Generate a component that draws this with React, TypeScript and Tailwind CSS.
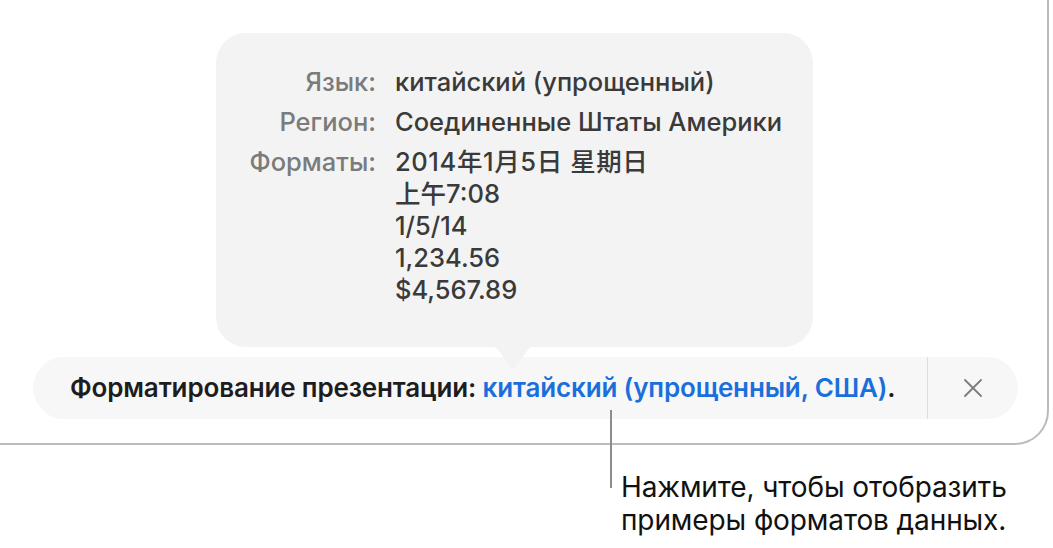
import React from "react";

export default function App() {
  const font = { fontFamily: 'Inter, "Noto Sans CJK SC", sans-serif' };
  return (
    <div className="relative w-[1053px] h-[548px] bg-white overflow-hidden" style={font}>
      {/* window frame */}
      <div className="h-[445px] w-[1049px] border-b-2 border-r-2 border-[#bcbcbc] rounded-br-[34px] flex flex-col justify-end pb-[24px] pl-[33px]">
        <div className="h-[62px] w-[985px] rounded-full bg-[#f7f7f7] flex items-center">
          <div className="flex-1 pl-[37px] text-[26px] leading-[32px] font-semibold text-[#1d1d1d] tracking-[-0.15px] whitespace-nowrap">
            Форматирование презентации:{" "}
            <span className="text-[#1b6fdc]">китайский (упрощенный, США)</span>.
          </div>
          <div className="h-full w-[91px] border-l border-[#dcdcdc] flex items-center justify-center">
            <svg width="22" height="22" viewBox="0 0 22 22" fill="none">
              <path d="M3 3 L19 19 M19 3 L3 19" stroke="#7c7c7c" strokeWidth="1.8" strokeLinecap="round" />
            </svg>
          </div>
        </div>
      </div>

      {/* popover */}
      <div className="absolute left-[216px] top-[33px] w-[597px] h-[314px] rounded-[30px] bg-[#f3f3f3] pt-[33px] pl-[28px]">
        <div className="grid grid-cols-[132px_1fr] gap-x-[19px] gap-y-[8px] text-[25.5px] font-medium leading-[32px]">
          <div className="text-right text-[#7b7b7b]">Язык:</div>
          <div className="text-[#3a3a3a]">китайский (упрощенный)</div>
          <div className="text-right text-[#7b7b7b]">Регион:</div>
          <div className="text-[#3a3a3a]">Соединенные Штаты Америки</div>
          <div className="text-right text-[#7b7b7b]">Форматы:</div>
          <div className="text-[#3a3a3a] flex flex-col">
            <span className="tracking-[0.6px]">2014年1月5日 星期日</span>
            <span>上午7:08</span>
            <span>1/5/14</span>
            <span>1,234.56</span>
            <span>$4,567.89</span>
          </div>
        </div>
      </div>
      {/* popover arrow */}
      <svg className="absolute left-[488px] top-[346px]" width="50" height="23" viewBox="0 0 50 23">
        <path d="M0 0 L50 0 C42 0 40 3 37 8 L28 20 C26.5 22.5 23.5 22.5 22 20 L13 8 C10 3 8 0 0 0 Z" fill="#f3f3f3" />
      </svg>

      {/* callout */}
      <div className="absolute left-[610px] top-[410px] w-[2px] h-[78px] bg-[#8c8c8c]" />
      <div className="absolute left-[621px] top-[471px] text-[28px] leading-[33px] text-[#111] tracking-[-0.1px]">
        <div>Нажмите, чтобы отобразить</div>
        <div>примеры форматов данных.</div>
      </div>
    </div>
  );
}
